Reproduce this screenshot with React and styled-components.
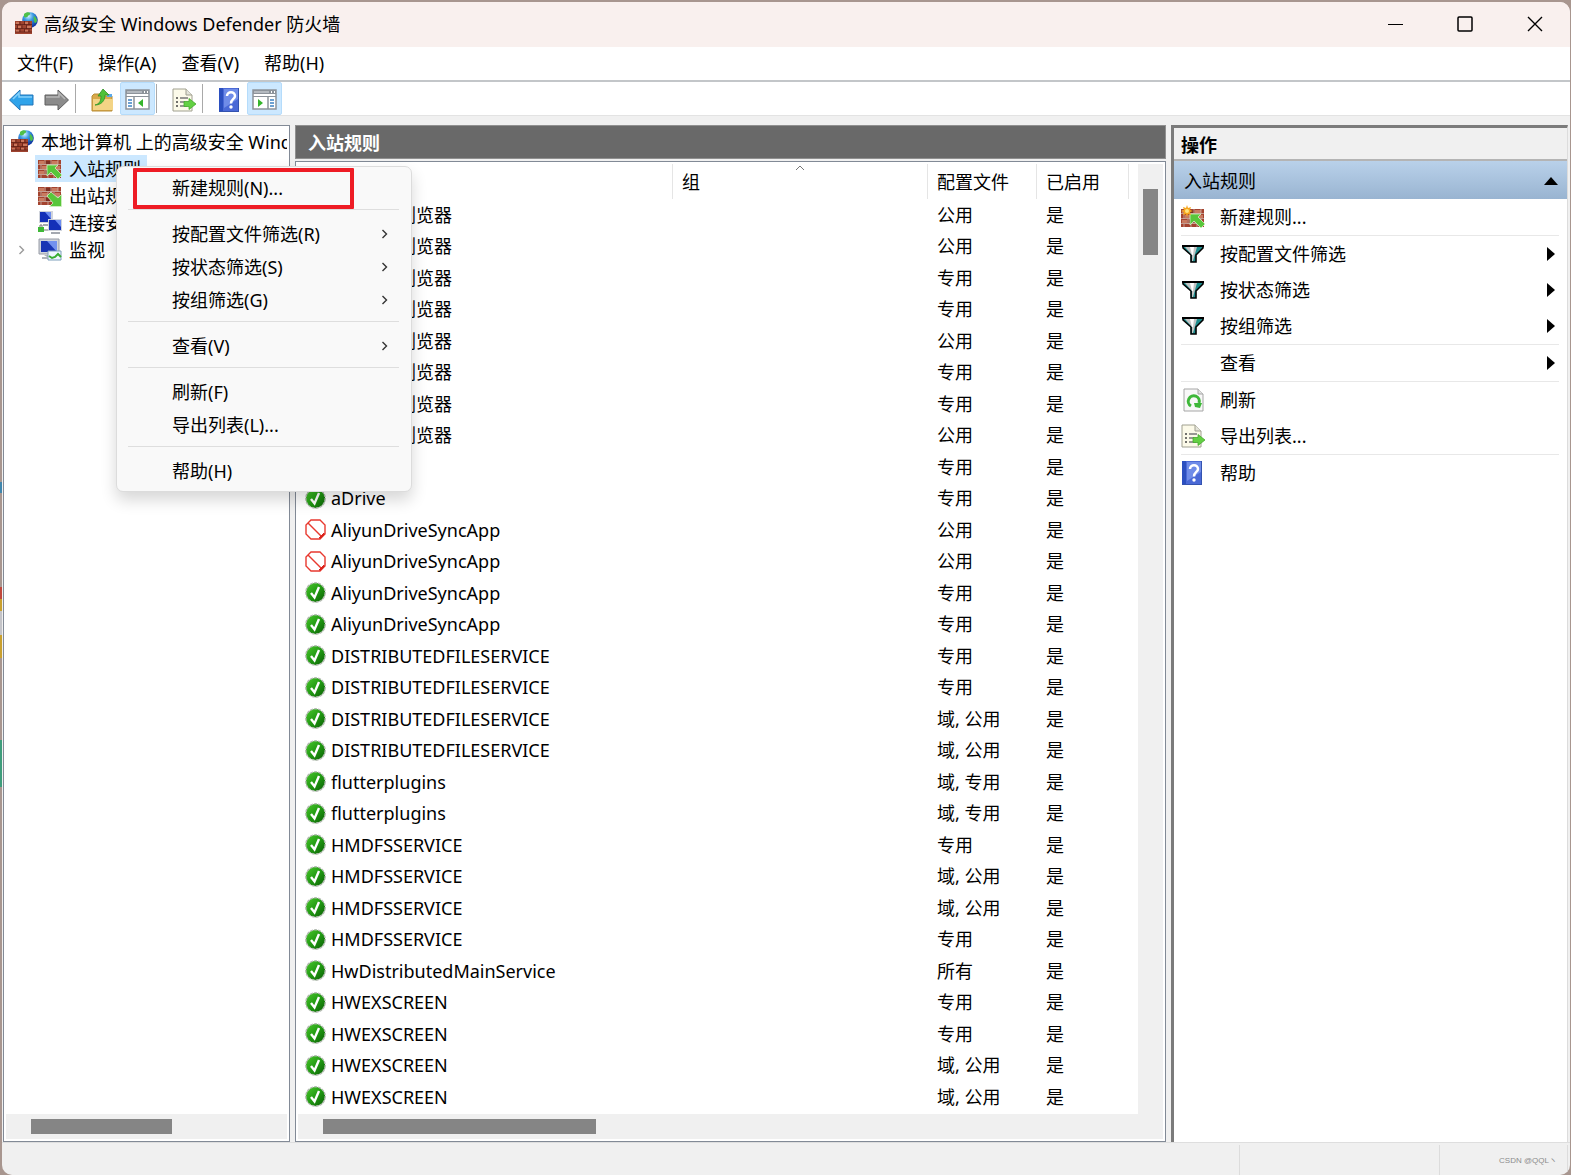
import React from "react";
import styled, { createGlobalStyle, css } from "styled-components";

const GlobalStyle = createGlobalStyle`
  * {
    box-sizing: border-box;
  }

  html,
  body,
  #root {
    height: 100%;
    margin: 0;
  }

  body {
    overflow: hidden;
    color: #000;
    font: 18px/24px "Noto Sans", "Noto Sans CJK SC", sans-serif;
  }

  button {
    margin: 0;
    padding: 0;
    border: 0;
    background: none;
    color: inherit;
    font: inherit;
    text-align: left;
  }

  ul {
    margin: 0;
    padding: 0;
    list-style: none;
  }

  svg {
    display: block;
    flex: none;
  }
`;

const Desktop = styled.div`
  height: 100vh;
  padding: 2px 1px 0 2px;
  background: linear-gradient(
      #a8968f 0 41%,
      #3f86ad 41% 42%,
      #a8968f 42% 50%,
      #c0483c 50% 51%,
      #c9a02f 51% 52%,
      #c4c4c8 52% 54%,
      #c9a02f 54% 56%,
      #a8968f 56% 63%,
      #3f9d7c 63% 67%,
      #a8968f 67%
    )
    left / 2px 100% no-repeat #a8968f;
`;

const Window = styled.div`
  position: relative;
  display: flex;
  flex-direction: column;
  height: 100%;
  overflow: hidden;
  border-radius: 10px;
  background: #f0f0f0;
`;

const TitleBar = styled.header`
  display: flex;
  align-items: center;
  gap: 6px;
  height: 45px;
  padding: 0 0 2px 13px;
  background: #f9f0ee;
`;

const WindowTitle = styled.h1`
  flex: 1;
  margin: 0;
  font-size: 18px;
  font-weight: 400;
`;

const CaptionButtons = styled.div`
  display: flex;
`;

const CaptionButton = styled.button`
  display: flex;
  align-items: center;
  justify-content: center;
  width: 70px;
  height: 43px;
`;

const MenuBar = styled.nav`
  display: flex;
  gap: 25px;
  height: 35px;
  padding: 0 15px 2px;
  border-bottom: 2px solid #c3c6c9;
  background: #fff;
`;

const Toolbar = styled.div`
  display: flex;
  height: 34px;
  padding-left: 2px;
  border-bottom: 1px solid #e3e3e3;
  background: #fff;
`;

const ToolButton = styled.button`
  display: flex;
  align-items: center;
  justify-content: center;
  width: 35px;
  height: 33px;
  padding-top: 2px;
  border-radius: 2px;
  ${props =>
    props.$active &&
    css`
      border: 1px solid #b5dcfb;
      background: #cce8ff;
    `}
`;

const ToolDivider = styled.span`
  width: 11px;
  padding: 2px 0 2px 1px;

  &::before {
    content: "";
    display: block;
    width: 1px;
    height: 100%;
    background: #a9a9a9;
  }
`;

const Workspace = styled.main`
  display: grid;
  grid-template-columns: 287px minmax(0, 1fr) 397px;
  gap: 5px;
  flex: 1;
  min-height: 0;
  padding: 9px 2px 0 1px;
`;

const TreePane = styled.aside`
  display: flex;
  flex-direction: column;
  min-height: 0;
  padding: 2px;
  border: 1px solid #828a96;
  background: #fff;
`;

const Tree = styled.ul`
  flex: 1;
  overflow: hidden;
`;

const TreeItem = styled.li`
  display: flex;
  align-items: center;
  height: 27px;
  padding-left: ${props => (props.$root ? 2 : 8)}px;
  white-space: nowrap;
`;

const Expander = styled.span`
  display: flex;
  justify-content: center;
  width: 14px;
  margin-right: 7px;
`;

const TreeLabel = styled.button`
  display: flex;
  align-items: center;
  gap: 7px;
  min-width: 0;
  height: 27px;
  padding: 0 6px 0 3px;
  background: ${props => (props.$selected ? "#cce8ff" : "none")};
`;

const RootLabel = styled(TreeLabel)`
  padding-right: 0;
`;

const RootName = styled.span`
  overflow: hidden;
`;

const HTrack = styled.div`
  display: flex;
  align-items: center;
  height: 25px;
  padding-left: ${props => props.$inset}px;
  background: #f0f0f0;
`;

const HThumb = styled.div`
  width: ${props => props.$length}px;
  height: 15px;
  background: #858585;
`;

const VTrack = styled.div`
  display: flex;
  justify-content: center;
  padding-top: 25px;
  background: #f0f0f0;
`;

const VThumb = styled.div`
  width: 15px;
  height: 66px;
  background: #858585;
`;

const RulesPane = styled.section`
  display: flex;
  flex-direction: column;
  gap: 2px;
  min-height: 0;
`;

const RulesTitle = styled.h2`
  height: 34px;
  margin: 0;
  padding: 5px 12px;
  border: 1px solid #909090;
  background: #696969;
  color: #fff;
  font-size: 18px;
  line-height: 24px;
`;

const RulesFrame = styled.div`
  display: grid;
  grid-template-columns: minmax(0, 1fr) 25px;
  grid-template-rows: minmax(0, 1fr) 25px;
  flex: 1;
  min-height: 0;
  padding: 2px;
  border: 1px solid #828a96;
  background: #fff;
`;

const TableClip = styled.div`
  overflow: hidden;
`;

const Corner = styled.div`
  background: #f0f0f0;
`;

const RulesTable = styled.table`
  width: 100%;
  border-spacing: 0;
  table-layout: fixed;

  th {
    position: relative;
    height: 35px;
    padding: 0 9px;
    border-right: 1px solid #e5e5e5;
    font-weight: 400;
    text-align: left;
  }

  th:last-child {
    border-right: 0;
  }

  td {
    height: 31px;
    padding: 0 9px;
    white-space: nowrap;
  }

  tr:nth-child(even) td {
    height: 32px;
  }
`;

const Col = styled.col`
  width: ${props => props.$width}px;
`;

const SortMark = styled.span`
  position: absolute;
  top: 1px;
  left: 50%;
  margin-left: -5px;
`;

const RuleName = styled.span`
  display: flex;
  align-items: center;
  gap: 5px;
  margin-left: -2px;
`;

const ActionsPane = styled.aside`
  min-height: 0;
  border: solid #7b7b7b;
  border-width: 3px 0 0 3px;
  border-right: 1px solid #dcdcdc;
  background: #fff;
`;

const ActionsTitle = styled.h2`
  height: 33px;
  margin: 0;
  padding: 5px 7px;
  border-bottom: 2px solid #b4b4b4;
  background: #f0f0f0;
  font-size: 18px;
  line-height: 24px;
`;

const ActionsGroup = styled.button`
  display: flex;
  align-items: center;
  justify-content: space-between;
  width: 100%;
  height: 38px;
  padding: 2px 9px 0 10px;
  background: linear-gradient(#b9d1ea, #99b4d1);
`;

const ActionRow = styled.button`
  display: grid;
  grid-template-columns: 24px 1fr 12px;
  align-items: center;
  gap: 15px;
  width: 100%;
  height: 36px;
  padding: 0 8px 0 7px;
`;

const ActionDivider = styled.hr`
  height: 1px;
  margin: 0 8px 0 7px;
  border: 0;
  background: #e8e8e8;
`;

const StatusBar = styled.footer`
  display: grid;
  grid-template-columns: 1fr 200px 128px;
  height: 33px;
  padding-right: 2px;
  border-top: 1px solid #dedede;
`;

const StatusCell = styled.div`
  display: flex;
  align-items: center;
  justify-content: flex-end;
  margin-top: 2px;
  padding: 2px 10px 0 0;
  border-right: 1px solid #dcdcdc;
  color: #8c8c8c;
  font: 8px/12px "Liberation Sans", "Noto Sans CJK SC", sans-serif;
`;

const ContextMenu = styled.div`
  position: absolute;
  top: 164px;
  left: 114px;
  width: 296px;
  padding: 4px 12px 4px 11px;
  border: 1px solid #dcdcdc;
  border-radius: 7px;
  background: #f9f9f9;
  box-shadow: 0 8px 16px rgba(0, 0, 0, 0.16);
`;

const MenuItem = styled.button`
  position: relative;
  display: flex;
  align-items: center;
  justify-content: space-between;
  width: 100%;
  height: 33px;
  padding: 0 11px 0 44px;
`;

const MenuDivider = styled.hr`
  height: 1px;
  margin: 5px 0 7px;
  border: 0;
  background: #dedede;
`;

const Highlight = styled.span`
  position: absolute;
  top: -3px;
  left: 5px;
  width: 221px;
  height: 41px;
  border: 4px solid #ee1c25;
  border-radius: 1px;
`;

const Bricks = () => (
  <g>
    <path d="M0 0h23v18H0z" fill="#a4432f" />
    <path d="M1 1h5v3H1zM14 1h6v3h-6zM4 6h6v3H4zM17 6h5v3h-5zM1 11h5v3H1zM14 11h6v3h-6z" fill="#c87a60" />
    <path d="M8 1h5v3H8zM11 6h5v3h-5zM8 11h5v3H8z" fill="#7d2f22" />
    <path
      d="M0 4.5h23M0 9.500h23M0 14.500h23M7 0v5M13 0v5M20 0v5M3 5v5M10 5v5M16 5v5M7 10v5M13 10v5M20 10v5M3 15v3M10 15v3M16 15v3"
      stroke="#cbb3a8"
      strokeWidth="0.8"
    />
  </g>
);

const FirewallIcon = () => (
  <svg width="23" height="23" viewBox="0 0 23 23">
    <defs>
      <radialGradient id="globe" cx="40%" cy="25%" r="75%">
        <stop offset="0" stopColor="#d6f4ff" />
        <stop offset="0.4" stopColor="#3d9be4" />
        <stop offset="1" stopColor="#0b2f9c" />
      </radialGradient>
    </defs>
    <circle cx="15" cy="8" r="7.8" fill="url(#globe)" />
    <path d="M9 2c2-2 5-2 6-1 1 2-2 2-2 3s-3 2-4 1zM19 4c2 1 3 3 3 5-1 3-3 2-3 0s-1-3 0-5z" fill="#4fc04a" />
    <path d="M0 9h17v13H0z" fill="#a04430" />
    <path d="M1 10h3v2H1zM10 10h3v2h-3zM3 14h3v2H3zM12 14h4v2h-4zM1 18h3v2H1zM10 18h3v2h-3z" fill="#c9765c" />
    <path
      d="M0 12.5h17M0 16.5h17M0 20h17M5 9v4M9.5 9v4M14 9v4M2.5 13v4M7 13v4M11.5 13v4M5 17v3M9.5 17v3M14 17v3"
      stroke="#5c1d14"
      strokeWidth="0.7"
    />
  </svg>
);

const InboundIcon = () => (
  <svg width="24" height="22" viewBox="0 0 24 22">
    <g transform="translate(0 2)">
      <Bricks />
    </g>
    <path d="M9 7h11l-3 3 7 7-4 4-7-7-4 4z" fill="#58c63a" stroke="#d3f0c4" strokeWidth="0.8" />
  </svg>
);

const OutboundIcon = () => (
  <svg width="24" height="22" viewBox="0 0 24 22">
    <g transform="translate(0 2)">
      <Bricks />
    </g>
    <path d="M23.5 21.5h-12l3.500-3.500-6-7 4-4 7 6 3.500-3.500z" fill="#58c63a" stroke="#d3f0c4" strokeWidth="0.8" />
  </svg>
);

const NewRuleIcon = () => (
  <svg width="24" height="24" viewBox="0 0 24 24">
    <g transform="translate(0 4)">
      <Bricks />
    </g>
    <path d="M9 9h11l-3 3 7 7-4 4-7-7-4 4z" fill="#58c63a" stroke="#d3f0c4" strokeWidth="0.8" />
    <path d="M6 0l1 3 3-1-1 3 3 1-3 1 1 3-3-1-1 3-1-3-3 1 1-3-3-1 3-1-1-3 3 1z" fill="#f6a51d" />
    <circle cx="6" cy="6" r="2" fill="#ffe680" />
  </svg>
);

const ConnectionIcon = () => (
  <svg width="24" height="24" viewBox="0 0 24 24">
    <path d="M1 0h14v12H1z" fill="#d0d4dc" />
    <path d="M2 1h11v10H2z" fill="#1430b8" />
    <path d="M7 1h6v7z" fill="#6d8df0" />
    <path d="M5 13h6v2H5z" fill="#a4a8b0" />
    <path d="M10 8h14v12H10z" fill="#d0d4dc" />
    <path d="M11 9h12v10H11z" fill="#1430b8" />
    <path d="M17 9h6v7z" fill="#6d8df0" />
    <path d="M13 21h9v2h-9z" fill="#a4a8b0" />
    <path d="M0 16h6v5H0z" fill="#3fb838" />
    <path d="M2 16v-2h2v2M6 19h4" fill="none" stroke="#777" />
  </svg>
);

const MonitorIcon = () => (
  <svg width="24" height="24" viewBox="0 0 24 24">
    <path d="M1 1h20v15H1z" fill="#cfd3da" stroke="#989ca6" />
    <path d="M3 3h16v11H3z" fill="#1a35b4" />
    <path d="M9 3h10v11z" fill="#7391ef" />
    <path d="M6 17h7v2H4v2h8" fill="#b0b4bb" />
    <path d="M10 13h13v9H10z" fill="#eef7ff" stroke="#7f9fbb" />
    <path d="M11 18l3 2 3-1 3-3 3 3" fill="none" stroke="#37ad30" strokeWidth="2" />
  </svg>
);

const ArrowIcon = ({ forward }) => (
  <svg width="25" height="22" viewBox="0 0 25 22">
    <path
      d={forward ? "M24.500 11L14 1v5H1v10h13v5z" : "M0.5 11L11 1v5h13v10H11v5z"}
      fill={forward ? "#8b8b8b" : "#2fa3ea"}
      stroke={forward ? "#5f5f5f" : "#2274b8"}
    />
    <path
      d={forward ? "M2 8h13V4l6 6" : "M4 10l6-6v4h13"}
      fill="none"
      stroke={forward ? "#b8b8b8" : "#84d0fa"}
      strokeWidth="1.5"
    />
  </svg>
);

const FolderUpIcon = () => (
  <svg width="23" height="24" viewBox="0 0 23 24">
    <path d="M1 8l2-2h6l2 2h10v15H1z" fill="#d9a94a" stroke="#b98d36" />
    <path d="M2 11h20v11H2z" fill="#f3d485" />
    <path d="M16 6h5v3h-5z" fill="#5aa8e8" />
    <path d="M4 17c5-1 6-5 6-9H7l5-7 6 6h-4c0 6-4 10-10 10z" fill="#4fc238" stroke="#2f9324" strokeWidth="0.8" />
  </svg>
);

const PaneIcon = ({ right }) => (
  <svg width="25" height="21" viewBox="0 0 25 21">
    <path d="M1 1h23v19H1z" fill="#fff" stroke="#8d939a" strokeWidth="1.5" />
    <path d="M1 1h23v4H1z" fill="#8d939a" />
    <path d="M2 3h15" stroke="#dce0e5" />
    <path d="M19 3h1M22 3h1" stroke="#fff" strokeWidth="2" />
    <path d="M1 7.5h23" stroke="#8d939a" />
    <path d={right ? "M16 8v12" : "M9 8v12"} stroke="#8d939a" strokeWidth="1.5" />
    <path
      d={right ? "M18 11h4M18 14h4M18 17h4" : "M3 11h4M3 14h4M3 17h4"}
      stroke="#3c82c4"
      strokeWidth="1.5"
    />
    <path d={right ? "M6 10l5 4-5 4z" : "M18 10l-5 4 5 4z"} fill="#35b52c" />
  </svg>
);

const ExportIcon = () => (
  <svg width="24" height="24" viewBox="0 0 24 24">
    <path d="M1 1h13l6 6v16H1z" fill="#fcfae9" stroke="#a0a090" />
    <path d="M14 1v6h6" fill="#e4e4da" stroke="#a0a090" />
    <path d="M4 10h2M4 14h2M4 18h2" stroke="#444" strokeWidth="1.5" />
    <path d="M8 10h8M8 14h5M8 18h7" stroke="#777" strokeWidth="1.5" />
    <path d="M12 13.5h5v-3l7 5.500-7 5.500v-3h-5z" fill="#63d043" stroke="#45a82e" strokeWidth="0.8" />
  </svg>
);

const HelpIcon = () => (
  <svg width="24" height="24" viewBox="0 0 24 24">
    <path d="M1 0h20v24H1z" fill="#4a69d6" />
    <path d="M1 0h4v24H1z" fill="#2b4fc0" />
    <path d="M6 1h14v10L6 20z" fill="#6f8ce8" />
    <path d="M20.5 0v24M1 23.500h20" stroke="#3453b0" />
    <path d="M9 8c0-5 8-5 8 0 0 3-4 3-4 7.500" fill="none" stroke="#fff" strokeWidth="2.5" />
    <circle cx="13" cy="19" r="1.7" fill="#fff" />
  </svg>
);

const RefreshIcon = () => (
  <svg width="24" height="24" viewBox="0 0 24 24">
    <path d="M3 1h14l5 5v17H3z" fill="#f8f8f8" stroke="#a6a6a6" />
    <path d="M17 1v5h5" fill="#e2e2e2" stroke="#a6a6a6" />
    <path d="M10 18a5.500 5.500 0 1 1 8-3" fill="none" stroke="#3eb839" strokeWidth="3" />
    <path d="M13 15h8l-2 5-5-1z" fill="#3eb839" />
  </svg>
);

const FilterIcon = () => (
  <svg width="24" height="18" viewBox="0 0 24 18">
    <path d="M2 1h20v2l-7 7v7h-5v-7L2 3z" fill="#1d8c8c" stroke="#000" strokeWidth="1.6" />
    <path d="M4 2h12l-4 14h-1v-6z" fill="#c4c4c4" />
    <path d="M9 2h4l-1 8h-1z" fill="#fff" />
    <path d="M1 1h22" stroke="#000" strokeWidth="2" />
  </svg>
);

const AllowIcon = () => (
  <svg width="21" height="21" viewBox="0 0 21 21">
    <defs>
      <linearGradient id="allow" x1="0" y1="0" x2="1" y2="1">
        <stop offset="0" stopColor="#4cc92e" />
        <stop offset="0.5" stopColor="#219a12" />
        <stop offset="1" stopColor="#0a5d05" />
      </linearGradient>
    </defs>
    <circle cx="10.5" cy="10.5" r="9.7" fill="url(#allow)" stroke="#b4bbb2" strokeWidth="1.4" strokeDasharray="3 1" />
    <path d="M6 11l3.500 4.500L14 5" fill="none" stroke="#fff" strokeWidth="2.4" />
  </svg>
);

const BlockIcon = () => (
  <svg width="21" height="21" viewBox="0 0 21 21">
    <path d="M6 1h9l5 5v9l-5 5H6l-5-5V6z" fill="#fff" stroke="#e8392f" strokeWidth="1.4" />
    <path d="M3 4l14 14" stroke="#e8392f" strokeWidth="1.4" />
    <path d="M14 19l5-5v2l-3 3z" fill="#d9231c" stroke="#d9231c" />
  </svg>
);

const Chevron = ({ color = "#333" }) => (
  <svg width="7" height="10" viewBox="0 0 7 10">
    <path d="M1.5 1l4 4-4 4" fill="none" stroke={color} strokeWidth="1.4" />
  </svg>
);

const RightTriangle = () => (
  <svg width="8" height="14" viewBox="0 0 8 14">
    <path d="M0 0l8 7-8 7z" />
  </svg>
);

const menus = ["文件(F)", "操作(A)", "查看(V)", "帮助(H)"];

const treeItems = [
  { label: "入站规则", icon: <InboundIcon />, selected: true },
  { label: "出站规则", icon: <OutboundIcon /> },
  { label: "连接安全规则", icon: <ConnectionIcon /> },
  { label: "监视", icon: <MonitorIcon />, expandable: true }
];

// [name, profile, blocked]
const rules = [
  ["360安全浏览器", "公用"],
  ["360安全浏览器", "公用"],
  ["360安全浏览器", "专用"],
  ["360安全浏览器", "专用"],
  ["360安全浏览器", "公用"],
  ["360安全浏览器", "专用"],
  ["360安全浏览器", "专用"],
  ["360安全浏览器", "公用"],
  ["aDrive", "专用"],
  ["aDrive", "专用"],
  ["AliyunDriveSyncApp", "公用", true],
  ["AliyunDriveSyncApp", "公用", true],
  ["AliyunDriveSyncApp", "专用"],
  ["AliyunDriveSyncApp", "专用"],
  ["DISTRIBUTEDFILESERVICE", "专用"],
  ["DISTRIBUTEDFILESERVICE", "专用"],
  ["DISTRIBUTEDFILESERVICE", "域, 公用"],
  ["DISTRIBUTEDFILESERVICE", "域, 公用"],
  ["flutterplugins", "域, 专用"],
  ["flutterplugins", "域, 专用"],
  ["HMDFSSERVICE", "专用"],
  ["HMDFSSERVICE", "域, 公用"],
  ["HMDFSSERVICE", "域, 公用"],
  ["HMDFSSERVICE", "专用"],
  ["HwDistributedMainService", "所有"],
  ["HWEXSCREEN", "专用"],
  ["HWEXSCREEN", "专用"],
  ["HWEXSCREEN", "域, 公用"],
  ["HWEXSCREEN", "域, 公用"]
];

const contextItems = [
  { label: "新建规则(N)...", highlighted: true },
  null,
  { label: "按配置文件筛选(R)", submenu: true },
  { label: "按状态筛选(S)", submenu: true },
  { label: "按组筛选(G)", submenu: true },
  null,
  { label: "查看(V)", submenu: true },
  null,
  { label: "刷新(F)" },
  { label: "导出列表(L)..." },
  null,
  { label: "帮助(H)" }
];

const actions = [
  { label: "新建规则...", icon: <NewRuleIcon /> },
  null,
  { label: "按配置文件筛选", icon: <FilterIcon />, submenu: true },
  { label: "按状态筛选", icon: <FilterIcon />, submenu: true },
  { label: "按组筛选", icon: <FilterIcon />, submenu: true },
  null,
  { label: "查看", submenu: true },
  null,
  { label: "刷新", icon: <RefreshIcon /> },
  { label: "导出列表...", icon: <ExportIcon /> },
  null,
  { label: "帮助", icon: <HelpIcon /> }
];

const App = () => (
  <Desktop>
    <GlobalStyle />
    <Window>
      <TitleBar>
        <FirewallIcon />
        <WindowTitle>高级安全 Windows Defender 防火墙</WindowTitle>
        <CaptionButtons>
          <CaptionButton aria-label="最小化">
            <svg width="16" height="16" viewBox="0 0 16 16">
              <path d="M1 8.5h15" stroke="#000" />
            </svg>
          </CaptionButton>
          <CaptionButton aria-label="最大化">
            <svg width="16" height="16" viewBox="0 0 16 16">
              <rect x="1" y="1" width="14" height="14" rx="1" fill="none" stroke="#000" strokeWidth="1.5" />
            </svg>
          </CaptionButton>
          <CaptionButton aria-label="关闭">
            <svg width="16" height="16" viewBox="0 0 16 16">
              <path d="M1 1l14 14M15 1L1 15" stroke="#000" strokeWidth="1.4" />
            </svg>
          </CaptionButton>
        </CaptionButtons>
      </TitleBar>

      <MenuBar>
        {menus.map(label => (
          <button key={label}>{label}</button>
        ))}
      </MenuBar>

      <Toolbar>
        <ToolButton aria-label="后退">
          <ArrowIcon />
        </ToolButton>
        <ToolButton aria-label="前进">
          <ArrowIcon forward />
        </ToolButton>
        <ToolDivider />
        <ToolButton aria-label="上一级">
          <FolderUpIcon />
        </ToolButton>
        <ToolButton aria-label="显示/隐藏控制台树" $active>
          <PaneIcon />
        </ToolButton>
        <ToolDivider />
        <ToolButton aria-label="导出列表">
          <ExportIcon />
        </ToolButton>
        <ToolDivider />
        <ToolButton aria-label="帮助">
          <HelpIcon />
        </ToolButton>
        <ToolButton aria-label="显示/隐藏操作窗格" $active>
          <PaneIcon right />
        </ToolButton>
      </Toolbar>

      <Workspace>
        <TreePane>
          <Tree>
            <TreeItem $root>
              <RootLabel>
                <FirewallIcon />
                <RootName>本地计算机 上的高级安全 Windows</RootName>
              </RootLabel>
            </TreeItem>
            {treeItems.map(item => (
              <TreeItem key={item.label}>
                <Expander>{item.expandable && <Chevron color="#9a9a9a" />}</Expander>
                <TreeLabel $selected={item.selected}>
                  {item.icon}
                  {item.label}
                </TreeLabel>
              </TreeItem>
            ))}
          </Tree>
          <HTrack $inset={25}>
            <HThumb $length={141} />
          </HTrack>
        </TreePane>

        <RulesPane>
          <RulesTitle>入站规则</RulesTitle>
          <RulesFrame>
            <TableClip>
              <RulesTable>
                <colgroup>
                  <Col $width={375} />
                  <Col $width={255} />
                  <Col $width={109} />
                  <Col $width={92} />
                  <col />
                </colgroup>
                <thead>
                  <tr>
                    <th>名称</th>
                    <th>
                      组
                      <SortMark>
                        <svg width="10" height="6" viewBox="0 0 10 6">
                          <path d="M1 5l4-4 4 4" fill="none" stroke="#777" />
                        </svg>
                      </SortMark>
                    </th>
                    <th>配置文件</th>
                    <th>已启用</th>
                    <th />
                  </tr>
                </thead>
                <tbody>
                  {rules.map(([name, profile, blocked], i) => (
                    <tr key={i}>
                      <td>
                        <RuleName>
                          {blocked ? <BlockIcon /> : <AllowIcon />}
                          {name}
                        </RuleName>
                      </td>
                      <td />
                      <td>{profile}</td>
                      <td>是</td>
                      <td />
                    </tr>
                  ))}
                </tbody>
              </RulesTable>
            </TableClip>
            <VTrack>
              <VThumb />
            </VTrack>
            <HTrack $inset={25}>
              <HThumb $length={273} />
            </HTrack>
            <Corner />
          </RulesFrame>
        </RulesPane>

        <ActionsPane>
          <ActionsTitle>操作</ActionsTitle>
          <ActionsGroup>
            入站规则
            <svg width="14" height="8" viewBox="0 0 14 8">
              <path d="M0 8l7-8 7 8z" />
            </svg>
          </ActionsGroup>
          {actions.map((item, i) =>
            item ? (
              <ActionRow key={i}>
                <span>{item.icon}</span>
                <span>{item.label}</span>
                {item.submenu && <RightTriangle />}
              </ActionRow>
            ) : (
              <ActionDivider key={i} />
            )
          )}
        </ActionsPane>
      </Workspace>

      <StatusBar>
        <StatusCell />
        <StatusCell />
        <StatusCell>CSDN @QQLヽ</StatusCell>
      </StatusBar>

      <ContextMenu>
        {contextItems.map((item, i) =>
          item ? (
            <MenuItem key={i}>
              {item.label}
              {item.submenu && <Chevron />}
              {item.highlighted && <Highlight />}
            </MenuItem>
          ) : (
            <MenuDivider key={i} />
          )
        )}
      </ContextMenu>
    </Window>
  </Desktop>
);

export default App;
